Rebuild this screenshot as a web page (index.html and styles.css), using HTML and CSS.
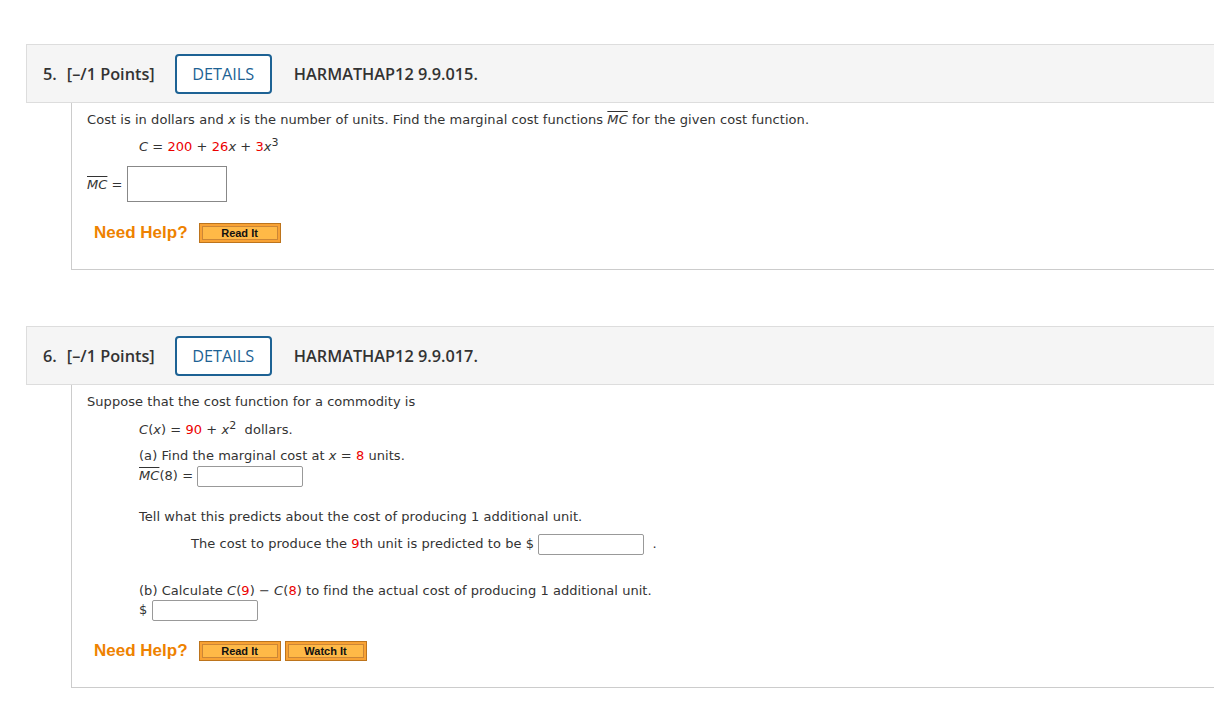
FILE: index.html
```html
<!DOCTYPE html>
<html lang="en">
<head>
    <meta charset="UTF-8">
    <title>Assignment</title>
    <link rel="stylesheet" href="styles.css">
</head>
<body>
    <div class="question">
        <div class="q-head">
            <span class="q-num">5.</span>
            <span class="q-points">[–/1 Points]</span>
            <button class="details">DETAILS</button>
            <span class="q-code">HARMATHAP12 9.9.015.</span>
        </div>
        <div class="q-body">
            <p class="line">Cost is in dollars and <i>x</i> is the number of units. Find the marginal cost functions <i class="bar">MC</i> for the given cost function.</p>
            <p class="line indent eq">
                <i>C</i> = <span class="red">200</span> + <span class="red">26</span><i>x</i> + <span class="red">3</span><i>x</i><sup>3</sup>
            </p>
            <div class="answer-row">
                <i class="bar">MC</i>&nbsp;=&nbsp;<input type="text" class="big-input">
            </div>
            <div class="help">
                <span class="need">Need Help?</span>
                <button class="help-btn">Read It</button>
            </div>
        </div>
    </div>

    <div class="question">
        <div class="q-head">
            <span class="q-num">6.</span>
            <span class="q-points">[–/1 Points]</span>
            <button class="details">DETAILS</button>
            <span class="q-code">HARMATHAP12 9.9.017.</span>
        </div>
        <div class="q-body second">
            <p class="line">Suppose that the cost function for a commodity is</p>
            <p class="line indent eq2">
                <i>C</i>(<i>x</i>) = <span class="red">90</span> + <i>x</i><sup>2</sup>&nbsp; dollars.
            </p>
            <div class="indent part-a">
                <div>(a) Find the marginal cost at <i>x</i> = <span class="red">8</span> units.</div>
                <div><i class="bar">MC</i>(8) = <input type="text" class="small-input"></div>
            </div>
            <p class="line indent tell">Tell what this predicts about the cost of producing 1 additional unit.</p>
            <div class="indent2 predict">
                The cost to produce the <span class="red">9</span>th unit is predicted to be $ <input type="text" class="small-input"> &nbsp;.
            </div>
            <div class="indent part-b">
                <div>(b) Calculate <i>C</i>(<span class="red">9</span>) − <i>C</i>(<span class="red">8</span>) to find the actual cost of producing 1 additional unit.</div>
                <div>$ <input type="text" class="small-input"></div>
            </div>
            <div class="help">
                <span class="need">Need Help?</span>
                <button class="help-btn">Read It</button>
                <button class="help-btn">Watch It</button>
            </div>
        </div>
    </div>
</body>
</html>
```

FILE: styles.css
```css
body {
    margin: 0;
    padding-top: 44px;
    overflow-x: hidden;
    font-family: "DejaVu Sans", Verdana, sans-serif;
    font-size: 13px;
    letter-spacing: 0.05px;
    color: #333;
    background: #fff;
}
.question {
    margin-left: 26px;
    margin-right: -20px;
    margin-bottom: 56px;
}
.q-head {
    display: flex;
    align-items: center;
    height: 57px;
    border: 1px solid #ddd;
    background-color: #f5f5f5;
    padding-left: 16px;
    font-family: "Open Sans", sans-serif;
    font-size: 16.3px;
    font-weight: 600;
    letter-spacing: 0;
    color: #333;
}
.q-points {
    margin-left: 10px;
}
.details {
    margin-left: 20px;
    width: 97px;
    height: 40px;
    border: 2px solid #1d6294;
    border-radius: 4px;
    background: #fff;
    color: #1d6294;
    font-family: "Open Sans", sans-serif;
    font-size: 16.3px;
    font-weight: 400;
}
.q-code {
    margin-left: 22px;
}
.q-body {
    margin-left: 45px;
    border-left: 1px solid #ccc;
    border-bottom: 1px solid #ccc;
    padding: 7px 0 26px 15px;
}
.line {
    margin: 0;
    line-height: 20px;
}
.indent {
    margin-left: 52px;
}
.indent2 {
    margin-left: 104px;
}
.eq {
    margin-top: 7px;
}
.eq2 {
    margin-top: 8px;
}
.red {
    color: #ec0000;
}
sup {
    font-size: 11px;
    line-height: 0;
}
.bar {
    text-decoration: overline;
}
.answer-row {
    display: flex;
    align-items: center;
    margin-top: 9px;
}
.big-input {
    width: 100px;
    height: 36px;
    box-sizing: border-box;
    border: 1px solid #888;
    margin: 0;
}
.small-input {
    width: 106px;
    height: 21px;
    box-sizing: border-box;
    border: 1px solid #999;
    border-radius: 2px;
    margin: 0;
    vertical-align: middle;
}
.part-a {
    margin-top: 6px;
    line-height: 20px;
}
.tell {
    margin-top: 20px;
}
.predict {
    margin-top: 6px;
    line-height: 22px;
}
.part-b {
    margin-top: 26px;
    line-height: 19px;
}
.help {
    display: flex;
    align-items: center;
    margin-top: 21px;
    margin-left: 7px;
}
.second .help {
    margin-top: 20px;
}
.need {
    font-family: "Liberation Sans", Arial, sans-serif;
    font-weight: bold;
    font-size: 17px;
    letter-spacing: 0;
    color: #ee8200;
    margin-right: 11px;
}
.help-btn {
    width: 82px;
    height: 20px;
    margin-right: 4px;
    padding: 0;
    border: 1px solid #bd741c;
    background: #ffb947;
    box-shadow: inset 0 0 0 2px #f8a234, inset 0 0 0 3px #cc8636;
    font-family: "Liberation Sans", Arial, sans-serif;
    font-size: 11px;
    font-weight: bold;
    letter-spacing: 0;
    color: #111;
}
```
